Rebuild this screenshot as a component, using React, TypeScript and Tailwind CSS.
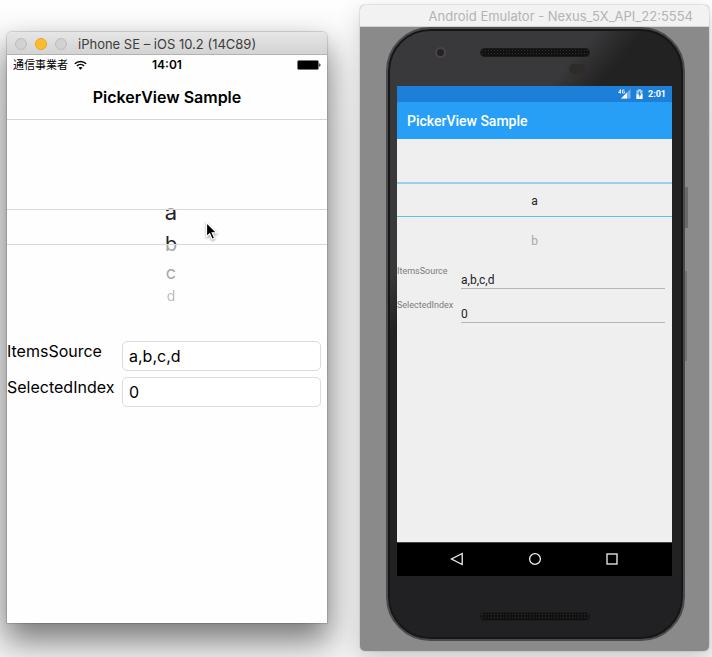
import type { ReactNode } from "react";

type FieldProps = { id: string; label: string; value: string };

function TrafficLight({ label, active = false }: { label: string; active?: boolean }) {
  return (
    <button
      type="button"
      aria-label={label}
      className={
        active
          ? "size-3 rounded-full border border-[#e8a41c] bg-[#fdbc2e]"
          : "flex size-3 items-center justify-center rounded-full border border-[#bdbdbd] bg-[#d1d1d1]"
      }
    />
  );
}

function WifiIcon() {
  return (
    <svg viewBox="0 0 13 10" className="h-[10px] w-[13px]" fill="none" stroke="#000" aria-hidden="true">
      <path d="M.8 3.700C4 .6 9 .6 12.200 3.700" strokeWidth="1.500" />
      <path d="M3 5.900c2-1.900 5-1.900 7 0" strokeWidth="1.500" />
      <path d="M6.500 9.700 4.500 7.800c1-1 3-1 4 0z" fill="#000" stroke="none" />
    </svg>
  );
}

function BatteryIcon() {
  return (
    <svg viewBox="0 0 25 10" className="h-[10px] w-[25px]" aria-hidden="true">
      <rect x="1.500" y=".5" width="21" height="9" rx="1.500" fill="#000" stroke="#777" />
      <rect x="2" y="1.500" width="20" height="7.500" rx="1" fill="#000" />
      <path d="M23.300 3.200c1.600.4 1.600 3.200 0 3.600z" fill="#000" />
    </svg>
  );
}

function Pointer() {
  return (
    <svg viewBox="0 0 14 20" className="h-5 w-[14px] drop-shadow-[0_1px_1px_rgba(0,0,0,0.4)]" aria-hidden="true">
      <path
        d="M1.500 1.500v14.200l3.200-3 2.400 5.500 2.500-1.100-2.400-5.300h4.500z"
        fill="#000"
        stroke="#fff"
        strokeWidth="1.200"
      />
    </svg>
  );
}

function IosField({ id, label, value }: FieldProps) {
  return (
    <>
      <label htmlFor={id} className="text-[16px] leading-5">
        {label}
      </label>
      <input
        id={id}
        defaultValue={value}
        className="h-[30px] w-full min-w-0 rounded-[5px] border border-[#dcdcdc] bg-white px-1.5 text-[16px] outline-none"
      />
    </>
  );
}

function IosWindow() {
  return (
    <section className="relative mt-8 flex h-[591px] min-w-0 flex-[320] flex-col rounded-t-[5px] bg-[#fefefe] font-['Inter','Noto_Sans_CJK_JP',sans-serif] text-black shadow-[0_0_1px_1px_rgba(0,0,0,0.15),0_16px_32px_2px_rgba(0,0,0,0.5)]">
      <header className="flex h-[23px] items-center gap-2 rounded-t-[5px] border-b border-[#b3b3b3] bg-linear-to-b from-[#e6e6e6] to-[#d3d3d3] px-2 pt-[2px]">
        <TrafficLight label="Close" />
        <TrafficLight label="Minimize" active />
        <TrafficLight label="Zoom" />
        <h2 className="ml-[3px] text-[13px] leading-4 text-[#3c3c3c]">iPhone SE – iOS 10.2 (14C89)</h2>
      </header>
      <div className="grid h-5 grid-cols-[1fr_auto_1fr] items-center px-1.5 text-[11px] leading-4">
        <span className="flex items-center gap-1.5">
          通信事業者
          <WifiIcon />
        </span>
        <span className="text-[12px] font-semibold">14:01</span>
        <span className="flex justify-end">
          <BatteryIcon />
        </span>
      </div>
      <div className="flex h-[45px] items-center justify-center border-b border-[#d5d5d5]">
        <h1 className="text-[16px] leading-5 font-semibold">PickerView Sample</h1>
      </div>
      <div className="relative h-[216px]">
        <ul role="listbox" aria-label="Items" className="pt-[77px] pl-2 text-center text-[#222]">
          <li role="option" aria-selected="true" className="h-[30px] text-[22px] leading-[30px]">a</li>
          <li role="option" aria-selected="false" className="h-[32px] text-[20px] leading-[34px]">b</li>
          <li role="option" aria-selected="false" className="h-[26px] text-[18px] leading-[28px]">c</li>
          <li role="option" aria-selected="false" className="h-[20px] text-[14px] leading-[22px] opacity-75">d</li>
        </ul>
        <div className="pointer-events-none absolute inset-0 flex flex-col">
          <div className="h-[90px] border-b border-[#d8d8d8] bg-[#fefefe]/60" />
          <div className="h-[34px]" />
          <div className="flex-1 border-t border-[#d8d8d8] bg-[#fefefe]/60" />
        </div>
        <div className="absolute top-[101px] left-[62%]">
          <Pointer />
        </div>
      </div>
      <form className="grid grid-cols-[109px_1fr] gap-1.5 pt-[5px] pr-1.5">
        <IosField id="ios-source" label="ItemsSource" value="a,b,c,d" />
        <IosField id="ios-index" label="SelectedIndex" value="0" />
      </form>
    </section>
  );
}

function Speaker() {
  return (
    <div className="mx-auto h-[9px] w-[110px] rounded-full border border-[#1a1a1a] bg-[#111] bg-[radial-gradient(#303030_30%,transparent_40%)] bg-size-[3px_3px]" />
  );
}

function SignalIcon() {
  return (
    <svg viewBox="0 0 13 10" className="h-[10px] w-[13px]" aria-hidden="true">
      <path d="M12.500 0v9.500H3z" fill="#76b1e6" />
      <path d="M9 3.500v6H3z" fill="#fff" />
      <path d="M2.500.5.500 3.500h2.500M2.500.5v4M6.500 1H4.500v3h2V2.800H5.600" fill="none" stroke="#fff" strokeWidth=".8" />
    </svg>
  );
}

function ChargingIcon() {
  return (
    <svg viewBox="0 0 7 10" className="h-[10px] w-[7px]" aria-hidden="true">
      <path d="M2.300 0h2.400v1H6.500v9h-6V1h1.800z" fill="#9fcaf0" />
      <path d="M.5 5h6v5h-6z" fill="#fff" />
      <path d="M4 2 1.800 5.600h1.500V8.500l2-3.700H4z" fill="#1e80d8" />
    </svg>
  );
}

function AndroidField({ id, label, value }: FieldProps) {
  return (
    <>
      <label htmlFor={id} className="text-[9px] leading-3 text-[#7c7c7c]">
        {label}
      </label>
      <input
        id={id}
        defaultValue={value}
        className="mb-2.5 h-6 w-full min-w-0 border-b border-[#b5b5b5] bg-transparent pt-1.5 text-[12px] leading-4 text-[#222] outline-none"
      />
    </>
  );
}

function NavButton({ label, children }: { label: string; children: ReactNode }) {
  return (
    <button type="button" aria-label={label}>
      <svg viewBox="0 0 14 14" className="size-[14px]" fill="none" stroke="#f0f0f0" strokeWidth="1.300" aria-hidden="true">
        {children}
      </svg>
    </button>
  );
}

function AndroidScreen() {
  return (
    <div className="flex h-[490px] flex-col bg-[#efefef]">
      <div className="flex h-4 items-center justify-end gap-[5px] bg-[#1d7fd7] pr-1.5 text-[9px] leading-4 font-bold text-white">
        <SignalIcon />
        <ChargingIcon />
        <span>2:01</span>
      </div>
      <div className="flex h-[37px] items-center bg-[#279ff6] px-2.5 pt-px">
        <h1 className="text-[14px] leading-4 font-medium text-white">PickerView Sample</h1>
      </div>
      <ul
        role="listbox"
        aria-label="Items"
        className="h-[126px] pt-[43px] text-center text-[12px] text-[#222]"
      >
        <li role="option" aria-selected="true" className="h-[35px] border-t-2 border-b border-t-[#96d3ea] border-b-[#5fc3e8] leading-[34px]">a</li>
        <li role="option" aria-selected="false" className="h-[48px] leading-[48px] text-[#a8a8a8]">b</li>
      </ul>
      <form className="grid grid-cols-[58px_1fr] gap-x-1.5 pr-[7px]">
        <AndroidField id="android-source" label="ItemsSource" value="a,b,c,d" />
        <AndroidField id="android-index" label="SelectedIndex" value="0" />
      </form>
      <nav className="mt-auto flex h-[34px] items-center justify-between border-t border-[#444] bg-black px-[53px] pb-[2px]">
        <NavButton label="Back">
          <path d="M12.200 1.500v11L1.500 7z" />
        </NavButton>
        <NavButton label="Home">
          <circle cx="7" cy="7" r="5.400" />
        </NavButton>
        <NavButton label="Overview">
          <rect x="2" y="2" width="10" height="10" />
        </NavButton>
      </nav>
    </div>
  );
}

function AndroidWindow() {
  return (
    <section className="relative mt-[5px] flex h-[646px] min-w-0 flex-[349] flex-col rounded-[5px] bg-[#8a8a8a] font-[Roboto,sans-serif] shadow-[0_0_1px_1px_rgba(0,0,0,0.08),0_8px_24px_rgba(0,0,0,0.18)]">
      <header className="flex h-[22px] items-center justify-end rounded-t-[5px] border-b border-[#d4d4d4] bg-[#f2f2f2] pr-4">
        <h2 className="truncate font-[Inter,sans-serif] text-[13px] leading-4 text-[#b3b3b3]">
          Android Emulator - Nexus_5X_API_22:5554
        </h2>
      </header>
      <div className="relative mr-6 ml-[26px] h-[614px] rounded-[44px] border-2 border-[#4b4b4d] bg-linear-130 from-[#39393b] from-26% to-[#222223] to-32% pr-[11px] pl-[9px] shadow-[inset_0_0_0_2px_#161616]">
        <div className="absolute inset-x-[2px] bottom-[2px] h-[62px] rounded-b-[40px] bg-[#212022]" />
        <div className="absolute top-[158px] -right-[5px] h-[41px] w-[3px] bg-[#6a6a6a]" />
        <div className="absolute top-[242px] -right-[4px] h-[90px] w-[2px] bg-[#727272]" />
        <div className="absolute top-[18px] left-[47px] size-[11px] rounded-full border-2 border-[#49444a] bg-[#242226]" />
        <div className="absolute top-[35px] right-[98px] h-[10px] w-[16px] rounded-full bg-[#2e2b29]" />
        <div className="relative flex h-full flex-col">
          <div className="h-[57px] pt-[19px]">
            <Speaker />
          </div>
          <AndroidScreen />
          <div className="pt-9">
            <Speaker />
          </div>
        </div>
      </div>
    </section>
  );
}

export default function App() {
  return (
    <main className="flex min-h-screen items-start gap-[33px] overflow-hidden bg-linear-to-b from-[#fefefe] to-[#f4f4f4] to-20% pr-[3px] pl-[7px]">
      <IosWindow />
      <AndroidWindow />
    </main>
  );
}
